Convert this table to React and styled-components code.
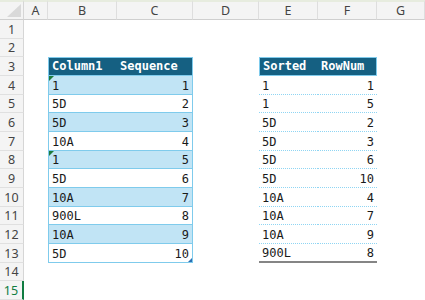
import React from "react";
import styled, { createGlobalStyle } from "styled-components";

const GlobalStyle = createGlobalStyle`
  html, body {
    margin: 0;
    padding: 0;
    background: #fff;
  }
  body {
    width: 425px;
    height: 300px;
    overflow: hidden;
  }
  * {
    box-sizing: border-box;
  }
`;

const Sheet = styled.div`
  display: grid;
  grid-template-columns: 24px 24px 69px 76px 66px 59px 59px 1fr;
  grid-template-rows: 20px repeat(15, 18.67px);
  width: 425px;
  height: 300px;
  overflow: hidden;
  background: #fff;
`;

const Corner = styled.div`
  grid-column: 1;
  grid-row: 1;
  display: flex;
  align-items: flex-end;
  justify-content: flex-end;
  padding: 0 2px 2px 0;
  background: #f4f4f4;
  border-top: 2px solid #e7ecdf;
  border-right: 1px solid #d6d6d6;
  border-bottom: 1px solid #cfcfcf;
`;

const ColHead = styled.div`
  grid-row: 1;
  grid-column: ${(p) => p.$col};
  display: flex;
  align-items: center;
  justify-content: center;
  background: #f4f4f4;
  border-top: 2px solid #e7ecdf;
  border-right: 1px solid #dedede;
  border-bottom: 1px solid #cfcfcf;
  color: #444;
  font-family: "Noto Sans", "Open Sans", sans-serif;
  font-size: 12.5px;
`;

const RowHead = styled.div`
  grid-column: 1;
  grid-row: ${(p) => p.$row + 1};
  display: flex;
  align-items: center;
  justify-content: center;
  padding-top: 1px;
  background: #f4f4f4;
  border-bottom: 1px solid #e0e0e0;
  border-right: ${(p) => (p.$selected ? "2px solid #107c41" : "1px solid #d6d6d6")};
  color: ${(p) => (p.$selected ? "#107c41" : "#444")};
  font-family: "Noto Sans", "Open Sans", sans-serif;
  font-size: 12.5px;
`;

const Table = styled.div`
  grid-column: ${(p) => p.$cols};
  grid-row: ${(p) => p.$rows};
  display: grid;
  grid-template-columns: subgrid;
  grid-template-rows: subgrid;
  font-family: "DejaVu Sans Mono", "Liberation Mono", monospace;
  font-size: 12px;
`;

const Cell = styled.div`
  position: relative;
  display: flex;
  align-items: flex-end;
  justify-content: ${(p) => (p.$right ? "flex-end" : "flex-start")};
  padding: 0 3px 1px 3px;
  white-space: nowrap;
  color: #1a1a1a;
`;

const BandedCell = styled(Cell)`
  background: ${(p) => (p.$band ? "#c1e4f5" : "#fff")};
  border-bottom: 1px solid #7fcbec;
  border-left: ${(p) => (p.$right ? "none" : "1px solid #7fcbec")};
  border-right: ${(p) => (p.$right ? "1px solid #7fcbec" : "none")};
`;

const HeaderCell = styled(Cell)`
  padding-bottom: 2px;
  background: #156082;
  color: #fff;
  font-weight: bold;
  justify-content: flex-start;
  border-top: 1px solid #7fcbec;
  border-bottom: 1px solid #7fcbec;
  border-left: ${(p) => (p.$last ? "none" : "1px solid #7fcbec")};
  border-right: ${(p) => (p.$last ? "1px solid #7fcbec" : "none")};
`;

const PlainCell = styled(Cell)`
  background: #fff;
  border-bottom: ${(p) => (p.$total ? "2px solid #858585" : "1px dotted #8fd5f3")};
`;

const ErrorMark = styled.span`
  position: absolute;
  top: 0;
  left: 0;
  width: 0;
  height: 0;
  border-top: 5px solid #1e7b3c;
  border-right: 5px solid transparent;
`;

const ResizeMark = styled.span`
  position: absolute;
  right: 0;
  bottom: 0;
  width: 0;
  height: 0;
  border-bottom: 4px solid #2b6fb3;
  border-left: 4px solid transparent;
`;

const columns = ["A", "B", "C", "D", "E", "F", "G"];

const source = [
  ["1", 1, true],
  ["5D", 2],
  ["5D", 3],
  ["10A", 4],
  ["1", 5, true],
  ["5D", 6],
  ["10A", 7],
  ["900L", 8],
  ["10A", 9],
  ["5D", 10],
];

const sorted = [
  ["1", 1],
  ["1", 5],
  ["5D", 2],
  ["5D", 3],
  ["5D", 6],
  ["5D", 10],
  ["10A", 4],
  ["10A", 7],
  ["10A", 9],
  ["900L", 8],
];

function CornerTriangle() {
  return (
    <svg width="14" height="13" viewBox="0 0 14 13">
      <polygon points="14,0 14,13 0,13" fill="#d9d9d9" />
    </svg>
  );
}

export default function App() {
  return (
    <>
      <GlobalStyle />
      <Sheet>
        <Corner>
          <CornerTriangle />
        </Corner>
        {columns.map((c, i) => (
          <ColHead key={c} $col={i + 2}>
            {c}
          </ColHead>
        ))}
        {Array.from({ length: 15 }, (_, i) => (
          <RowHead key={i} $row={i + 1} $selected={i === 14}>
            {i + 1}
          </RowHead>
        ))}

        <Table $cols="3 / 5" $rows="4 / 15">
          <HeaderCell>Column1</HeaderCell>
          <HeaderCell $last>Sequence</HeaderCell>
          {source.map(([name, seq, flagged], i) => (
            <React.Fragment key={i}>
              <BandedCell $band={i % 2 === 0}>
                {flagged && <ErrorMark />}
                {name}
              </BandedCell>
              <BandedCell $band={i % 2 === 0} $right>
                {seq}
                {i === source.length - 1 && <ResizeMark />}
              </BandedCell>
            </React.Fragment>
          ))}
        </Table>

        <Table $cols="6 / 8" $rows="4 / 15">
          <HeaderCell>Sorted</HeaderCell>
          <HeaderCell $last>RowNum</HeaderCell>
          {sorted.map(([name, num], i) => (
            <React.Fragment key={i}>
              <PlainCell $total={i === sorted.length - 1}>{name}</PlainCell>
              <PlainCell $total={i === sorted.length - 1} $right>
                {num}
              </PlainCell>
            </React.Fragment>
          ))}
        </Table>
      </Sheet>
    </>
  );
}
